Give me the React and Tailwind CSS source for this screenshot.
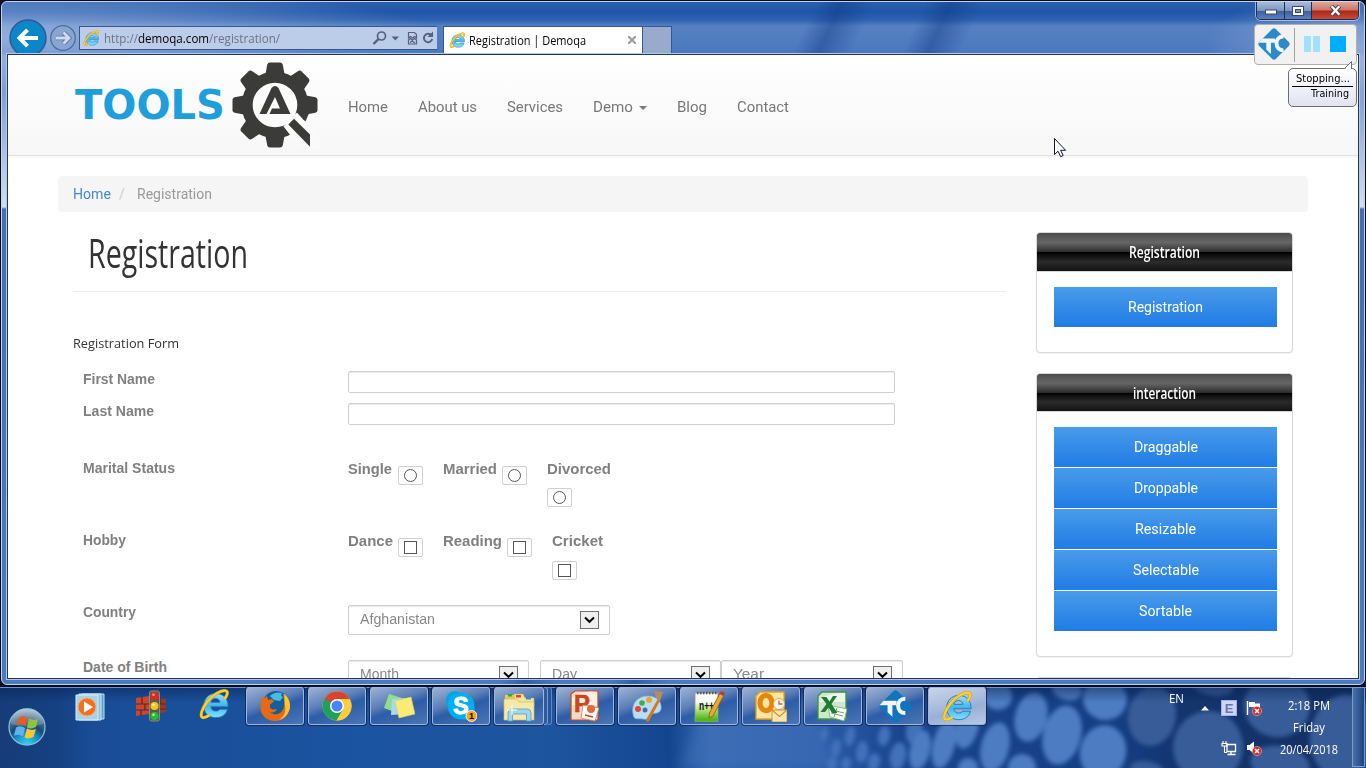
import { useLayoutEffect, useRef } from "react";

/* One line of text, squeezed or stretched horizontally to the given width. */
function Fit({ w, className = "", children }) {
  const ref = useRef(null);
  useLayoutEffect(() => {
    const el = ref.current;
    const fit = () => {
      el.style.transform = "none";
      el.style.transform = `scaleX(${w / el.getBoundingClientRect().width})`;
    };
    fit();
    document.fonts?.ready.then(fit);
  }, [w]);
  return (
    <span className={"block shrink-0 whitespace-nowrap " + className} style={{ width: w }}>
      <span ref={ref} className="inline-block origin-left">
        {children}
      </span>
    </span>
  );
}

const UI = "font-['Open_Sans',sans-serif]";
const ARIAL = "font-['Liberation_Sans',sans-serif]";

function IeIcon({ size, id }) {
  return (
    <svg width={size} height={size} viewBox="0 0 32 32" className="shrink-0 overflow-visible">
      <defs>
        <linearGradient id={id} x1="0" y1="0" x2="0" y2="1">
          <stop offset="0" stopColor="#9be0fa" />
          <stop offset=".5" stopColor="#45b4ea" />
          <stop offset="1" stopColor="#7fe2ff" />
        </linearGradient>
      </defs>
      <path
        d="M31 18.500H12c.3 3.200 2.400 4.700 5.200 4.700 2.200 0 3.700-.7 4.600-2h8.500C28.800 27.300 23.900 30.500 17.400 30.500 9.500 30.500 4 25.400 4 17.500 4 9.700 9.500 3.800 17.300 3.800c8.900 0 13.900 6 13.700 14.700zM12 13.600h10c-.3-2.600-2.200-4.100-4.900-4.100-2.700 0-4.600 1.500-5.100 4.100z"
        fill={`url(#${id})`}
        stroke="#1c79b8"
        strokeWidth="1"
      />
      <path
        d="M27 10C30.500 5.500 31.500 1.500 28 .8 23 0 14 5.500 8 13 2.500 20 0 27.500 2 29.800c1.500 1.500 5 .2 8.500-2.200"
        fill="none"
        stroke="#d99a10"
        strokeWidth="3.400"
      />
      <path
        d="M27 10C30.500 5.500 31.500 1.500 28 .8 23 0 14 5.500 8 13 2.500 20 0 27.500 2 29.800c1.500 1.500 5 .2 8.500-2.200"
        fill="none"
        stroke="#fdd02a"
        strokeWidth="2.400"
      />
    </svg>
  );
}

function TcIcon({ size, color }) {
  return (
    <svg width={size} height={size} viewBox="0 0 32 32" className="shrink-0">
      <path d="M14 1.200q2-1.700 4 0L30.800 14q1.700 2 0 4L18 30.800q-2 1.700-4 0L1.200 18q-1.700-2 0-4z" fill={color} />
      <path d="M4.500 10.500h12.500v4.300H13V26L8.300 21.500v-6.700H.5z" fill="#f3f7fb" />
      <path d="M25.500 8.500c-4.500 0-7 2.800-7 6.800 0 4.200 2.500 7 7 7" fill="none" stroke="#f3f7fb" strokeWidth="3.800" />
    </svg>
  );
}

function ToolsLogo() {
  return (
    <svg width="246" height="90" viewBox="74 60 246 90" className="shrink-0">
      <text
        x="75"
        y="119"
        fontSize="41.500"
        fontWeight="bold"
        fontFamily="DejaVu Sans, sans-serif"
        fill="#1e9fdb"
        textLength="150"
        lengthAdjust="spacingAndGlyphs"
      >
        TOOLS
      </text>
      <g fill="#3b3b3a">
        {[0, 45, 90, 135, 180, 225, 270, 315].map((a) => (
          <path
            key={a}
            transform={`rotate(${a} 275 105)`}
            d="M265.500 74L267.300 64.500q.6-2 2.500-2h10.400q1.900 0 2.500 2L284.500 74z"
          />
        ))}
      </g>
      <circle cx="275" cy="105" r="27.800" fill="none" stroke="#3b3b3a" strokeWidth="11" />
      <path d="M283.500 126.500L293.500 116 297 112.500 306 122.500 318 128 320 150H308L291 136z" fill="#fafafa" />
      <path d="M297 112.200L305.500 121.500 309.500 112 301 106z" fill="#3b3b3a" />
      <path d="M288.300 124.500l5.700-5.800L310 134.500v12.300z" fill="#3b3b3a" />
      <path d="M259.500 114L271.500 88q3.500-4 7 0L290.500 114H269.500l2.500-5.500h8L275 97l-8.500 17z" fill="#3b3b3a" />
    </svg>
  );
}

function Arrow() {
  return (
    <span className="flex h-[18px] w-[19px] shrink-0 items-center justify-center border border-[#707070] bg-[#efefef]">
      <svg width="11" height="8" viewBox="0 0 11 8">
        <path d="M1 1.500l4.500 4.300L10 1.500" fill="none" stroke="#000" strokeWidth="2" />
      </svg>
    </span>
  );
}

function Select({ label, w, textW, className = "" }) {
  return (
    <div
      className={`flex h-[30px] shrink-0 justify-between rounded-[2px] border border-[#cfcfcf] bg-white pl-[11px] pr-[10px] pt-[5px] shadow-[inset_0_1px_1px_rgba(0,0,0,.08)] ${w} ${className}`}
    >
      <Fit w={textW} className={ARIAL + " text-[14px] leading-[17px] text-[#888]"}>
        {label}
      </Fit>
      <Arrow />
    </div>
  );
}

function Choice({ square, className = "" }) {
  return (
    <span
      className={`flex h-[19px] w-[25px] shrink-0 items-center justify-center rounded-[2px] border border-[#d0d0d0] ${className}`}
    >
      <span className={"h-[13px] w-[13px] border border-[#555] " + (square ? "" : "rounded-full")} />
    </span>
  );
}

function Row({ label, w, h, children }) {
  return (
    <div className={"flex shrink-0 " + h}>
      <div className="w-[265px] shrink-0">
        <Fit w={w} className={ARIAL + " text-[14px] font-bold leading-5 text-[#808080]"}>
          {label}
        </Fit>
      </div>
      {children}
    </div>
  );
}

function Panel({ title, titleW, items, height, head }) {
  return (
    <div className={"shrink-0 overflow-hidden rounded-[4px] border border-[#d8d8d8] bg-white shadow-[0_1px_1px_rgba(0,0,0,.05)] " + height}>
      <div
        className={
          "flex justify-center border-b border-[#d8d8d8] bg-[linear-gradient(#4c4c4c_0%,#595959_12%,#666_25%,#474747_39%,#2c2c2c_50%,#000_51%,#111_60%,#2b2b2b_76%,#1c1c1c_91%,#131313_100%)] " +
          head
        }
      >
        <Fit w={titleW} className="font-['Open_Sans',sans-serif] text-[17px] font-semibold leading-[37px] text-white">
          {title}
        </Fit>
      </div>
      <div className="flex flex-col gap-px pl-[17px] pr-[15px] pt-[15px]">
        {items.map(([t, w]) => (
          <div key={t} className="flex h-10 justify-center bg-[linear-gradient(#499bea,#207ce5)]">
            <Fit w={w} className="font-[Roboto,sans-serif] text-[14px] leading-10 text-white">
              {t}
            </Fit>
          </div>
        ))}
      </div>
    </div>
  );
}

function TitleBar() {
  return (
    <div className="flex h-[51px] shrink-0 items-start">
      <div className="flex h-[51px] w-[435px] shrink-0 overflow-hidden pl-[6px]">
        <svg width="70" height="51" viewBox="8 2 70 51" className="shrink-0">
          <circle cx="28" cy="38" r="18" fill="#0b87c9" stroke="#34588f" strokeWidth="1.500" />
          <path d="M38 38H21M27.500 29.800L19.500 38l8 8.200" fill="none" stroke="#fff" strokeWidth="4" />
          <circle cx="63" cy="38" r="12.300" fill="#8ba5d2" stroke="#4c6da3" strokeWidth="1.300" />
          <path d="M56 38h12M63.500 32.500l5.500 5.500-5.500 5.500" fill="none" stroke="#5572a6" strokeWidth="4.500" />
          <path d="M56 38h12M63.500 32.500l5.500 5.500-5.500 5.500" fill="none" stroke="#cfdcf1" strokeWidth="2.800" />
        </svg>
        <div className="ml-px mt-[24px] flex h-[24px] w-[361px] shrink-0 items-center border border-[#35588f] bg-[#bccde9] pl-[4px] pr-[5px]">
          <IeIcon size={15} id="ie-address" />
          <Fit w={176} className={UI + " ml-[5px] mt-px text-[13px] text-[#6b7488]"}>
            http://<span className="text-black">demoqa.com</span>/registration/
          </Fit>
          <svg width="64" height="20" viewBox="370 28 64 20" className="ml-auto" fill="none" stroke="#56627c">
            <circle cx="381.500" cy="36" r="4" strokeWidth="1.700" />
            <path d="M378.500 39l-5 5" strokeWidth="2.400" />
            <path d="M391.500 36.500h7.500l-3.700 4z" fill="#56627c" stroke="none" />
            <path d="M408.500 36v-3.500h6l2 2V38l-2-1.500-2 1.500-2-1.500-2 1.500zM408.500 40l2-1.500 2 1.500 2-1.500 2 1.500v4h-8zM410 42.500l2-1.500 3 2" strokeWidth="1.200" />
            <path d="M431.500 35.500a4.200 4.200 0 1 0 .7 3.500" strokeWidth="1.900" />
            <path d="M427.500 37h5.500v-5.500z" fill="#56627c" stroke="none" />
          </svg>
        </div>
      </div>
      <div className="ml-[6px] mt-[24px] flex h-[27px] w-[200px] shrink-0 items-center border border-b-0 border-[#35588f] bg-white pl-[6px] pr-[6px]">
        <IeIcon size={15} id="ie-tab" />
        <Fit w={117} className={UI + " ml-[4px] mt-[2px] text-[12px] text-black"}>
          Registration | Demoqa
        </Fit>
        <svg width="8" height="8" viewBox="0 0 8 8" className="ml-auto">
          <path d="M0 0l8 8M8 0L0 8" stroke="#999" strokeWidth="2" />
        </svg>
      </div>
      <div className="mt-[24px] h-[27px] w-[29px] shrink-0 border border-b-0 border-l-0 border-[#35588f] bg-[#98abcc]" />
      <div className="ml-auto mr-[5px] flex h-[18px] shrink-0 overflow-hidden rounded-b-[5px] border border-t-0 border-[#1c2f55] shadow-[0_0_0_1px_rgba(200,215,240,.7)]">
        <div className="flex w-[28px] items-center justify-center border-r border-[#1c2f55] bg-[linear-gradient(#a9bbda_0%,#7c97c4_50%,#3c5f9c_52%,#5c80bd_100%)]">
          <svg width="14" height="12" viewBox="0 0 14 12">
            <rect x="1.500" y="5" width="11" height="4" fill="#fff" stroke="#3d4961" />
          </svg>
        </div>
        <div className="flex w-[27px] items-center justify-center border-r border-[#1c2f55] bg-[linear-gradient(#a9bbda_0%,#7c97c4_50%,#3c5f9c_52%,#5c80bd_100%)]">
          <svg width="12" height="10" viewBox="0 0 12 10">
            <rect x=".5" y=".5" width="11" height="9" fill="#fff" stroke="#3d4961" />
            <rect x="3.500" y="3.500" width="5" height="3" fill="#7c97c4" stroke="#3d4961" />
          </svg>
        </div>
        <div className="flex w-[46px] items-center justify-center bg-[linear-gradient(#e0a79c_0%,#cc7567_48%,#a8281b_52%,#cb4a35_100%)]">
          <svg width="13" height="11" viewBox="0 0 13 11">
            <path d="M2.500 1l8 9M10.500 1l-8 9" stroke="#4b3b46" strokeWidth="4.200" />
            <path d="M2.700 1.200l7.600 8.600M10.300 1.200L2.700 9.800" stroke="#fff" strokeWidth="2.400" />
          </svg>
        </div>
      </div>
    </div>
  );
}

function Page() {
  const nav = [
    ["Home", 40],
    ["About us", 59],
    ["Services", 56],
    ["Demo", 40],
    ["Blog", 30],
    ["Contact", 52],
  ];
  const bold = ARIAL + " text-[14px] font-bold leading-5 text-[#808080]";
  return (
    <div className="flex h-[623px] flex-col overflow-hidden bg-white">
      <div className="flex h-[101px] shrink-0 border-b border-[#e3e3e3] bg-[linear-gradient(#fff,#f7f7f7)] pl-[66px] pt-[5px] shadow-[0_1px_2px_rgba(0,0,0,.05)]">
        <ToolsLogo />
        <div className="ml-[28px] flex gap-[30px] pt-[35px]">
          {nav.map(([t, w]) => (
            <div key={t} className="flex items-center self-start">
              <Fit w={w} className="font-[Roboto,sans-serif] text-[15px] leading-6 text-[#777]">
                {t}
              </Fit>
              {t === "Demo" && (
                <svg width="8" height="4" viewBox="0 0 8 4" className="ml-[6px] mt-[2px]">
                  <path d="M0 0h8L4 4z" fill="#777" />
                </svg>
              )}
            </div>
          ))}
        </div>
      </div>
      <div className="ml-[50px] mt-5 flex h-9 w-[1250px] shrink-0 items-center rounded-[4px] bg-[#f5f5f5] pl-[15px] font-[Roboto,sans-serif] text-[14px]">
        <Fit w={38} className="text-[#428bca]">
          Home
        </Fit>
        <span className="ml-[8px] w-[18px] shrink-0 text-[#ccc]">/</span>
        <Fit w={75} className="text-[#999]">
          Registration
        </Fit>
      </div>
      <div className="flex pl-[65px]">
        <div className="w-[933px] shrink-0">
          <div className="h-[80px] border-b border-[#eee] pl-[15px] pt-[13px]">
            <Fit w={160} className="font-['Open_Sans',sans-serif] text-[40px] font-medium leading-[56px] text-[#333]">
              Registration
            </Fit>
          </div>
          <Fit w={106} className={UI + " mt-[41px] text-[13px] leading-5 text-[#333]"}>
            Registration Form
          </Fit>
          <div className="mt-[16px] flex flex-col pl-[10px]">
            <Row label="First Name" w={72} h="h-[32px]">
              <div className="mt-[2px] h-[22px] w-[547px] rounded-[2px] border border-[#cfcfcf] shadow-[inset_0_1px_1px_rgba(0,0,0,.07)]" />
            </Row>
            <Row label="Last Name" w={71} h="h-[57px]">
              <div className="mt-[2px] h-[22px] w-[547px] rounded-[2px] border border-[#cfcfcf] shadow-[inset_0_1px_1px_rgba(0,0,0,.07)]" />
            </Row>
            <Row label="Marital Status" w={92} h="h-[72px]">
              <div className="mt-px flex items-start">
                <Fit w={44} className={bold}>Single</Fit>
                <Choice className="ml-[6px] mt-[7px]" />
                <Fit w={54} className={bold + " ml-[20px]"}>Married</Fit>
                <Choice className="ml-[5px] mt-[7px]" />
                <div className="ml-[20px]">
                  <Fit w={64} className={bold}>Divorced</Fit>
                  <Choice className="mt-[9px]" />
                </div>
              </div>
            </Row>
            <Row label="Hobby" w={43} h="h-[72px]">
              <div className="mt-px flex items-start">
                <Fit w={45} className={bold}>Dance</Fit>
                <Choice square className="ml-[5px] mt-[7px]" />
                <Fit w={59} className={bold + " ml-[20px]"}>Reading</Fit>
                <Choice square className="ml-[5px] mt-[7px]" />
                <div className="ml-[20px]">
                  <Fit w={51} className={bold}>Cricket</Fit>
                  <Choice square className="mt-[10px]" />
                </div>
              </div>
            </Row>
            <Row label="Country" w={53} h="h-[55px]">
              <Select label="Afghanistan" w="w-[262px]" textW={75} className="mt-[3px]" />
            </Row>
            <Row label="Date of Birth" w={84} h="h-[33px]">
              <Select label="Month" w="w-[181px]" textW={39} className="mt-[3px]" />
              <Select label="Day" w="w-[181px]" textW={25} className="ml-[11px] mt-[3px]" />
              <Select label="Year" w="w-[182px]" textW={31} className="mt-[3px]" />
            </Row>
          </div>
        </div>
        <div className="ml-[30px] mt-[20px] flex w-[257px] shrink-0 flex-col gap-[20px]">
          <Panel title="Registration" titleW={71} items={[["Registration", 75]]} height="h-[121px]" head="h-[39px]" />
          <Panel
            title="interaction"
            titleW={63}
            height="h-[284px]"
            head="h-[38px]"
            items={[
              ["Draggable", 64],
              ["Droppable", 64],
              ["Resizable", 61],
              ["Selectable", 66],
              ["Sortable", 53],
            ]}
          />
          <div className="h-[40px] rounded-[4px] border border-[#d8d8d8]" />
        </div>
      </div>
    </div>
  );
}

const text = { fontFamily: "Liberation Sans, sans-serif", fontWeight: "bold" };

const icons = {
  media: (
    <>
      <path d="M7 2h22v25H7z" fill="#5f9fc9" stroke="#b8e0f2" />
      <path d="M4 2h22v26H4z" fill="#8dc0de" stroke="#cdeaf7" />
      <path d="M1 3h22v25H1z" fill="#a9d2e8" stroke="#d8eff9" />
      <circle cx="12" cy="15" r="9" fill="#f37021" stroke="#fbb070" />
      <path d="M9 9.500l9 5.500-9 5.500z" fill="#fff" />
    </>
  ),
  lights: (
    <>
      <path d="M1 8l13-2v18L1 26z" fill="#c14a35" />
      <path d="M18 8l13 1v13l-13 3z" fill="#8f3c30" />
      <path d="M1 14h13M1 20h13M7 7v7M10 14v6M6 20v6M19 14h12M19 19h12M25 8v6M23 14v5" stroke="#6d1f17" strokeWidth="1.200" />
      <rect x="14.500" y="1" width="10" height="30" rx="2" fill="#5a5a52" stroke="#8a8a80" />
      <circle cx="19.500" cy="6" r="4" fill="#e8251d" />
      <circle cx="19.500" cy="16" r="4" fill="#f5c518" />
      <circle cx="19.500" cy="26" r="4" fill="#22c02c" />
      <circle cx="18.500" cy="4.800" r="1.200" fill="#ffb3ad" />
      <circle cx="18.500" cy="14.800" r="1.200" fill="#fff0a8" />
      <circle cx="18.500" cy="24.800" r="1.200" fill="#b8ffb8" />
    </>
  ),
  firefox: (
    <>
      <circle cx="17" cy="14.500" r="13.500" fill="#155f98" />
      <path d="M11 6q5-5 12-3-2 3 1 4l-3 4-6-1z" fill="#49bde0" />
      <path d="M25 4c4 3 6.500 8 6 13C30 25.500 24 31 16 31 8 31 1.500 25.500 1.500 17.500c0-5 1-7.500 1.500-11.500L5 8.500l3-2.500 1 4 4-1 2 2.500-4 3 0 3c2 3 5 1.800 7 1.500-1 3-5 4-7 3.500 6 4 13 1 14-6 .6-4.500 0-8.500-1-12.500z" fill="#e66a16" />
      <path d="M25 4c4 3 6.500 8 6 13C30 24 25 29 20 30c6-4 7-9 6-14-.3-5-.5-8-1-12z" fill="#fbc62e" />
    </>
  ),
  chrome: (
    <>
      <circle cx="16" cy="16" r="14.500" fill="#e9c53a" />
      <path d="M16 16L28.800 9.200A14.500 14.500 0 0 0 3.600 8.500l5.400 10z" fill="#d9422f" />
      <path d="M16 16L3.600 8.500A14.500 14.500 0 0 0 15.500 30.500l7-11z" fill="#1fa15d" />
      <path d="M16 9h12.700A14.500 14.500 0 0 1 15.500 30.500L22 19.500z" fill="#fccd3c" />
      <circle cx="16" cy="16" r="7" fill="#fff" />
      <circle cx="16" cy="16" r="5.500" fill="#4486f4" />
    </>
  ),
  notes: (
    <>
      <path d="M6 4l13 4-5 15L1 18z" fill="#8fdd8d" />
      <path d="M9 9l14-1 1 16-16 1z" fill="#a9d7fa" />
      <path d="M12 11l16-4 4 17-16 4z" fill="#f8ec74" stroke="#e0cf4e" strokeWidth=".6" />
    </>
  ),
  skype: (
    <>
      <circle cx="10" cy="10" r="9" fill="#00a5e6" />
      <circle cx="21" cy="21" r="9" fill="#00a5e6" />
      <circle cx="16" cy="16" r="13.500" fill="#00aff0" />
      <text x="16" y="24" fontSize="23" textAnchor="middle" fill="#fff" stroke="#fff" {...text}>S</text>
      <circle cx="26.500" cy="26" r="5.500" fill="#f9a51a" stroke="#fff" strokeWidth=".8" />
      <text x="26.500" y="29.300" fontSize="9" textAnchor="middle" fill="#000" {...text}>1</text>
    </>
  ),
  explorer: (
    <>
      <path d="M2 5h10l2 3h17v20H2z" fill="#e3c965" />
      <path d="M11 4h9l2 4h9v8H11z" fill="#f3e59c" stroke="#c8a943" strokeWidth=".6" />
      <rect x="5" y="4" width="4" height="2.500" fill="#27b13c" />
      <rect x="13" y="5" width="5" height="2.500" fill="#d8452f" />
      <rect x="23" y="7" width="5" height="2.500" fill="#2f8fd6" />
      <path d="M1 9h13l2 3h15v18H1z" fill="#f6e9a8" stroke="#d4b95a" strokeWidth=".7" />
      <path d="M5 31v-8q0-4 4-4h15q4 0 4 4v8h-4.500v-7H9.500v7z" fill="#9fd6ee" stroke="#5aa7cd" strokeWidth=".9" />
      <path d="M9 15v10M4 20h10" stroke="#fff" strokeWidth="1" />
    </>
  ),
  powerpoint: (
    <>
      <path d="M6 1h23v29H2V4z" fill="#f6d8c6" stroke="#c84a1c" strokeWidth="1.200" />
      <path d="M3 8q10-8 25-6v13H3z" fill="#fff" opacity=".6" />
      <text x="5" y="22" fontSize="24" fill="#d24517" stroke="#b83a10" strokeWidth=".5" {...text}>P</text>
      <path d="M14 15l16 3-4 13-14-3z" fill="#fff" stroke="#d9794f" strokeWidth=".8" />
      <circle cx="22" cy="19" r="4" fill="#e06a3a" />
      <path d="M16 25l8 2" stroke="#d24517" strokeWidth="1.500" />
    </>
  ),
  paint: (
    <>
      <path d="M2 24C0 13 7 6 17 6s14 7 13 13-9 3-11 6-2 5-7 4-9 2-10-5z" fill="#b9def2" stroke="#7fb4d4" strokeWidth=".8" />
      <circle cx="7" cy="19" r="3" fill="#e0483c" />
      <circle cx="11" cy="13" r="2.800" fill="#3fae49" />
      <circle cx="18" cy="10" r="3" fill="#f1a32c" />
      <circle cx="14" cy="20" r="2.500" fill="#3a6fb5" />
      <path d="M28 7l2 2-12 22-3 1 1-4z" fill="#d9761c" />
      <path d="M23 1l9 1-3 8-4-2z" fill="#b98b62" />
    </>
  ),
  notepad: (
    <>
      <defs>
        <linearGradient id="pad" x1="0" y1="0" x2="0" y2="1">
          <stop offset=".3" stopColor="#f8fbf6" />
          <stop offset=".55" stopColor="#b8e58a" />
          <stop offset=".9" stopColor="#4fb81c" />
        </linearGradient>
      </defs>
      <path d="M2 3h23v29H2z" fill="url(#pad)" stroke="#8d998d" strokeWidth=".8" />
      <path d="M4 3h20" stroke="#555" strokeWidth="2.500" strokeDasharray="1.500 1.500" />
      <text x="6" y="20" fontSize="13" textLength="15" lengthAdjust="spacingAndGlyphs" fill="#111" {...text}>n++</text>
      <path d="M27 3l4 2-11 21-4 2 .5-5z" fill="#f0a62a" stroke="#8a5a16" strokeWidth=".8" />
      <path d="M28 1l4 2-1.500 3-4-2z" fill="#b23a3a" />
    </>
  ),
  outlook: (
    <>
      <path d="M5 2h24v27H1V6z" fill="#fce6a4" stroke="#e7a01b" strokeWidth="1.300" />
      <ellipse cx="11" cy="13" rx="6" ry="7.500" fill="none" stroke="#e8850f" strokeWidth="5.200" />
      <circle cx="24" cy="14" r="5.500" fill="#f4f6f9" stroke="#e3a93c" />
      <path d="M24 10.500V14h3.500" fill="none" stroke="#c56d12" strokeWidth="1.300" />
      <path d="M17 20h15v12H17z" fill="#fbe7ad" stroke="#c8962e" />
      <path d="M17 20l7.500 6.500L32 20" fill="none" stroke="#c8962e" strokeWidth="1.200" />
    </>
  ),
  excel: (
    <>
      <path d="M5 2h24v27H1V6z" fill="#cfe7ca" stroke="#3d9640" strokeWidth="1.300" />
      <path d="M3 9q10-7 25-6v9H3z" fill="#fff" opacity=".6" />
      <path d="M11 15l19 4-3 12-14-4z" fill="#fff" stroke="#6ab05f" strokeWidth=".8" />
      <path d="M15 20l12 3M14 23l12 3M20 18l-3 9" stroke="#6ab05f" strokeWidth="1" />
      <path d="M4 7h5.500l3 4.500L16 6h4l-5.500 8 6 9H15l-3.500-5.500L8 22H3.500l6-8z" fill="#1f7c33" />
    </>
  ),
};

function Icon({ name }) {
  if (name === "ie" || name === "ie-active") return <IeIcon size={29} id={"task-" + name} />;
  if (name === "tc") return <TcIcon size={33} color="#0f75bd" />;
  return (
    <svg width="32" height="32" viewBox="0 0 32 32" className="shrink-0">
      {icons[name]}
    </svg>
  );
}

function TaskButton({ name }) {
  const active = name === "ie-active";
  const stacked = name === "explorer";
  const look = active
    ? "bg-[linear-gradient(165deg,#c9d5e9_0%,#a8bbdc_45%,#98afd6_60%,#b9c9e5_100%)]"
    : "bg-[linear-gradient(160deg,#9db2d4_0%,#5c80b8_38%,#2c5da6_55%,#4a76b6_100%)]";
  const face =
    "flex h-[38px] items-center justify-center rounded-[3px] border border-[#9fb6d9] shadow-[0_0_0_1px_rgba(8,28,68,.65)] ";
  if (stacked)
    return (
      <div className="flex w-[58px] shrink-0">
        <div className={face + look + " w-[50px]"}>
          <Icon name={name} />
        </div>
        <div className="h-[38px] w-[4px] rounded-r-[3px] border border-l-0 border-[#7f9cc8] bg-[#2c5ba0]" />
        <div className="h-[38px] w-[4px] rounded-r-[3px] border border-l-0 border-[#6487bb] bg-[#2555a0]" />
      </div>
    );
  return (
    <div className={face + look + " w-[58px] shrink-0"}>
      <Icon name={name} />
    </div>
  );
}

const farPebbles = [
  [824, 48, 4, 7], [836, 62, 5, 9], [850, 50, 5, 10], [862, 66, 6, 11], [874, 76, 6, 9], [832, 78, 5, 7],
  [846, 78, 5, 7], [884, 50, 6, 10], [898, 70, 8, 14], [914, 44, 8, 14],
];
const pebbles = [
  [920, 64, 10, 20], [944, 58, 11, 25], [967, 42, 11, 21], [968, 82, 10, 10], [995, 61, 14, 25],
  [998, 10, 14, 14], [1031, 31, 16, 25], [1022, 82, 14, 14], [1062, 49, 19, 30], [1067, 4, 15, 10],
  [1105, 13, 22, 21], [1103, 66, 23, 27],
];
const dimPebbles = [
  [1152, 30, 24, 30], [1147, 84, 17, 9], [1208, 61, 35, 36], [1212, -2, 22, 11], [1277, 20, 33, 31],
  [1280, 78, 30, 18], [1344, 50, 34, 42],
];

function Wallpaper() {
  return (
    <svg width="1366" height="82" viewBox="0 0 1366 82" className="absolute inset-0 -z-10">
      <defs>
        <linearGradient id="wall">
          <stop offset="0" stopColor="#163d78" />
          <stop offset=".04" stopColor="#154082" />
          <stop offset=".07" stopColor="#1a4d96" />
          <stop offset=".25" stopColor="#1a53a0" />
          <stop offset=".4" stopColor="#1e559f" />
          <stop offset=".49" stopColor="#13468f" />
          <stop offset=".52" stopColor="#3667b0" />
          <stop offset=".6" stopColor="#2c5ca8" />
          <stop offset=".66" stopColor="#1a458e" />
          <stop offset=".82" stopColor="#143e83" />
          <stop offset=".86" stopColor="#14356f" />
          <stop offset="1" stopColor="#132f62" />
        </linearGradient>
        <linearGradient id="wall-shade" x1="0" y1="0" x2="0" y2="1">
          <stop offset="0" stopColor="#041d4b" stopOpacity=".5" />
          <stop offset=".2" stopColor="#041d4b" stopOpacity="0" />
        </linearGradient>
        <filter id="soft"><feGaussianBlur stdDeviation="2.200" /></filter>
        <filter id="softer"><feGaussianBlur stdDeviation="6" /></filter>
      </defs>
      <rect width="1366" height="82" fill="url(#wall)" />
      <path d="M700 30L815 20 835 82H680z" fill="#4273ba" opacity=".5" filter="url(#softer)" />
      <g filter="url(#soft)">
        {farPebbles.map(([x, y, rx, ry]) => (
          <ellipse key={x + "," + y} cx={x} cy={y} rx={rx} ry={ry} fill="#4371b9" transform={`rotate(10 ${x} ${y})`} />
        ))}
        {pebbles.map(([x, y, rx, ry]) => (
          <ellipse key={x + "," + y} cx={x} cy={y} rx={rx} ry={ry} fill="#4d7bc2" transform={`rotate(14 ${x} ${y})`} />
        ))}
        {dimPebbles.map(([x, y, rx, ry]) => (
          <ellipse key={x + "," + y} cx={x} cy={y} rx={rx} ry={ry} fill="#375c98" transform={`rotate(10 ${x} ${y})`} />
        ))}
      </g>
      <rect width="1366" height="82" fill="url(#wall-shade)" />
      <path d="M0 .5h1366" stroke="#050b18" />
      <path d="M0 1.500h1366" stroke="#6f93c8" />
    </svg>
  );
}

function BadgeX() {
  return (
    <>
      <circle cx="11" cy="11" r="4.600" fill="#dc2a22" stroke="#f6c9c5" strokeWidth=".5" />
      <path d="M9 9l4 4M13 9l-4 4" stroke="#fff" strokeWidth="1.500" />
    </>
  );
}

function Taskbar() {
  const tasks = ["firefox", "chrome", "notes", "skype", "explorer", "powerpoint", "paint", "notepad", "outlook", "excel", "tc", "ie-active"];
  return (
    <div className="relative isolate flex h-[82px] shrink-0 overflow-hidden">
      <Wallpaper />
      <div className="w-[73px] shrink-0 pl-[7px] pt-[21px]">
        <svg width="40" height="40" viewBox="0 0 40 40">
          <defs>
            <radialGradient id="orb" cx=".5" cy="1" r="1">
              <stop offset="0" stopColor="#35d6f8" />
              <stop offset=".35" stopColor="#1590c4" />
              <stop offset=".55" stopColor="#174a75" />
              <stop offset=".75" stopColor="#48708f" />
              <stop offset="1" stopColor="#a9bccb" />
            </radialGradient>
          </defs>
          <circle cx="20" cy="20" r="18" fill="url(#orb)" stroke="#84b9d6" strokeWidth="1.300" />
          <path d="M4 17a16 16 0 0 1 32 0q-16 5-32 0z" fill="#fff" opacity=".2" />
          <path d="M12 10.500q5-2.500 8.500.5l-2 8q-4-3-9-.5z" fill="#ea5a24" />
          <path d="M22 11.500q4 2.500 9 .5l-2 8q-5 2.500-9 .5z" fill="#8cc63e" />
          <path d="M9 20.500q5-2.500 9 .5l-2 8.500q-4.500-3-9-.5z" fill="#5fb2ea" />
          <path d="M20 21.500q4 2.500 9 .5l-2.500 8q-5 2.500-9 .5z" fill="#fcc62d" />
        </svg>
      </div>
      <div className="flex w-[173px] shrink-0 pl-[2px] pt-[4px]">
        <div className="w-[60px] pt-[2px]"><Icon name="media" /></div>
        <div className="w-[65px]"><Icon name="lights" /></div>
        <Icon name="ie" />
      </div>
      <div className="flex shrink-0 gap-[4px] pt-px">
        {tasks.map((t) => (
          <TaskButton key={t} name={t} />
        ))}
      </div>
      <div className={"ml-auto flex shrink-0 text-white " + UI}>
        <Fit w={15} className="mt-[5px] text-[12px] leading-4">EN</Fit>
        <svg width="8" height="5" viewBox="0 0 8 5" className="ml-[17px] mt-[20px]">
          <path d="M4 0l4 4.500H0z" fill="#fff" />
        </svg>
        <div className="ml-[12px] grid w-[41px] grid-cols-2 content-between pb-[12px] pt-[14px]">
          <svg width="16" height="16" viewBox="0 0 16 16">
            <rect width="16" height="16" fill="#9fb2ea" />
            <rect x="1" y="1" width="14" height="14" fill="#cdd6f7" />
            <text x="8" y="13" fontSize="13" textAnchor="middle" fill="#6b74b0" {...text}>E</text>
          </svg>
          <svg width="16" height="16" viewBox="0 0 16 16" className="ml-[4px]">
            <path d="M1.500 1v14" stroke="#fff" strokeWidth="1.400" />
            <path d="M3 2h6v1.500h5V8H8V7H3z" fill="#fff" />
            <BadgeX />
          </svg>
          <svg width="16" height="16" viewBox="0 0 16 16" fill="none" stroke="#fff">
            <path d="M6 4.500h8.500v7H6zM10 12v2.500M6.500 14.500h8" strokeWidth="1.300" />
            <path d="M2 1v2M5 1v2M1 3.500h5V6H1zM3.500 6v6.500H6" strokeWidth="1.100" />
          </svg>
          <svg width="16" height="16" viewBox="0 0 16 16" className="ml-[4px]">
            <path d="M1 5h2.500L8 1.500v12L3.500 10H1z" fill="#fff" />
            <BadgeX />
          </svg>
        </div>
        <div className="ml-[11px] flex w-[72px] flex-col items-center pt-[9px] text-[12px] leading-[22px]">
          <Fit w={42}>2:18 PM</Fit>
          <Fit w={32}>Friday</Fit>
          <Fit w={58}>20/04/2018</Fit>
        </div>
        <div className="ml-[7px] mr-px mt-px h-[80px] w-[13px] border border-[#7d9cc9] bg-[linear-gradient(90deg,#4a6fa8,#1b4580)]" />
      </div>
    </div>
  );
}

function Recorder() {
  return (
    <>
      <div className="absolute left-[1254px] top-[24px] flex h-[41px] w-[103px] items-start rounded-[4px] border border-[#b5b0a6] bg-[#f1f1f1] pl-[3px] pt-[3px]">
        <TcIcon size={32} color="#2c89ca" />
        <span className="ml-[4px] h-[34px] w-px bg-[#a5a29b]" />
        <span className="ml-[9px] mt-[8px] h-4 w-[7px] bg-[#9fe1ff]" />
        <span className="ml-[2px] mt-[8px] h-4 w-[7px] bg-[#9fe1ff]" />
        <span className="ml-[10px] mt-[8px] h-4 w-4 bg-[#00aeff]" />
      </div>
      <div className="absolute left-[1288px] top-[68px] h-[39px] w-[69px] rounded-[5px] border border-[#6e6e72] bg-[linear-gradient(#fff,#e3e3f1)] px-[3px] pt-[3px] font-['DejaVu_Sans',sans-serif] text-[11px] leading-[14px] text-black">
        <div className="flex justify-center border-b border-black">
          <Fit w={54}>Stopping...</Fit>
        </div>
        <div className="flex justify-end pr-[4px]">
          <Fit w={38}>Training</Fit>
        </div>
      </div>
      <svg width="10" height="9" viewBox="0 0 10 9" className="absolute left-[1344px] top-[61px]">
        <path d="M1 8L7.500.5V8z" fill="#fff" />
        <path d="M0 8L7.500.5V8" fill="none" stroke="#6e6e72" />
      </svg>
      <svg width="13" height="20" viewBox="0 0 13 20" className="absolute left-[1054px] top-[138px]">
        <path d="M.5.500v16l3.500-3.300 2.700 5.500 2.500-1.200-2.600-5.200h5z" fill="#fff" stroke="#11152b" />
      </svg>
    </>
  );
}

export default function App() {
  return (
    <div className="relative flex h-[768px] w-[1366px] flex-col overflow-hidden bg-[#0a1226]">
      <div className="h-[686px] shrink-0 rounded-[7px] border border-[#060c1c]">
        <div className="flex h-[684px] flex-col rounded-[6px] border border-[#c3d3ec] bg-[radial-gradient(ellipse_440px_55px_at_0%_35px,rgba(165,188,226,.8),transparent),radial-gradient(ellipse_160px_60px_at_1362px_45px,rgba(175,195,230,.65),transparent),linear-gradient(115deg,transparent_48.5%,rgba(12,52,125,.4)_50%,transparent_52%,transparent_55%,rgba(12,52,125,.4)_56.5%,transparent_58.5%),linear-gradient(#2c5fae_0px,#2056a8_10px,#2f62b0_18px,#5580c3_24px,#4b78bf_50px,#7f9fd2_55px,#7f9fd2_90px,#d3deef_205px,#456fb2_207px,#4d7abf_100%)]">
          <TitleBar />
          <div className="mx-[4px] border border-[#b4c8e8]">
            <div className="border border-[#22355c]">
              <Page />
            </div>
          </div>
        </div>
      </div>
      <Taskbar />
      <Recorder />
    </div>
  );
}
